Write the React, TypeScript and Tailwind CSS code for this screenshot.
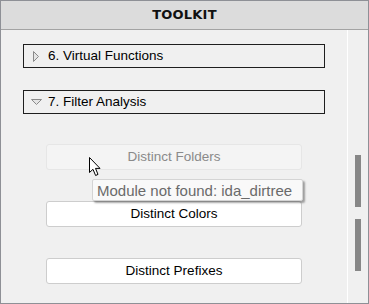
function RightTri() {
  return (
    <svg width="6" height="11" viewBox="0 0 6 11" className="shrink-0">
      <polygon points="0.5,0.5 5.5,5.5 0.5,10.5" fill="#e4e4e4" stroke="#8a8a8a" strokeWidth="1" />
    </svg>
  );
}

function DownTri() {
  return (
    <svg width="11" height="6" viewBox="0 0 11 6" className="shrink-0">
      <polygon points="0.5,0.5 10.5,0.5 5.5,5.5" fill="#e4e4e4" stroke="#8a8a8a" strokeWidth="1" />
    </svg>
  );
}

function Section({ label, open }: { label: string; open?: boolean }) {
  return (
    <div className="w-[302px] h-[24px] border border-[#1e1e1e] flex items-center">
      <div className="w-[24px] flex justify-center">{open ? <DownTri /> : <RightTri />}</div>
      <span className="text-[13.5px] text-black leading-none">{label}</span>
    </div>
  );
}

function Btn({ label, disabled }: { label: string; disabled?: boolean }) {
  return (
    <button
      className={
        disabled
          ? "w-[256px] h-[26px] rounded-[3px] border border-[#e6e6e6] bg-[#f4f4f4] text-[#8a8a8a] text-[13.5px]"
          : "w-[256px] h-[26px] rounded-[3px] border border-[#cdcdcd] bg-white text-black text-[13.5px]"
      }
    >
      {label}
    </button>
  );
}

export default function App() {
  return (
    <div
      className="relative w-[369px] h-[304px] border border-[#8e9096] bg-[#f0f0f0] flex flex-col overflow-hidden"
      style={{ fontFamily: '"Liberation Sans", Arial, sans-serif' }}
    >
      <div className="h-[29px] shrink-0 bg-[#dcdcdc] border-b border-[#a3a3a3] flex items-center justify-center">
        <span
          className="text-[13px] font-bold text-[#111] tracking-[0.2px]"
          style={{ fontFamily: '"DejaVu Sans", sans-serif' }}
        >
          TOOLKIT
        </span>
      </div>
      <div className="flex-1 flex">
        <div className="w-[347px] border-r border-white pt-[14px] pl-[22px]">
          <Section label="6. Virtual Functions" />
          <div className="mt-[22px]">
            <Section label="7. Filter Analysis" open />
          </div>
          <div className="mt-[30px] ml-[23px] flex flex-col gap-[31px]">
            <Btn label="Distinct Folders" disabled />
            <Btn label="Distinct Colors" />
            <Btn label="Distinct Prefixes" />
          </div>
        </div>
        <div className="flex-1 pt-[125px] pl-[7px] flex flex-col gap-[12px]">
          <div className="w-[6px] h-[52px] bg-[#878787]" />
          <div className="w-[6px] h-[52px] bg-[#878787]" />
        </div>
      </div>

      {/* tooltip */}
      <div className="absolute left-[91px] top-[178px] w-[211px] h-[22px] bg-[#f9f9f9] border border-[#d4d4d4] rounded-[2px] shadow-[2px_2px_2px_rgba(0,0,0,0.35)] flex items-center pl-[4px]">
        <span className="text-[15px] text-[#6a6a6a] leading-none whitespace-nowrap">Module not found: ida_dirtree</span>
      </div>

      {/* cursor */}
      <svg className="absolute left-[88px] top-[156px]" width="13" height="20" viewBox="0 0 13 20">
        <path
          d="M0.5 0.5 L0.5 15.5 L4 12.3 L6.6 18.5 L9 17.4 L6.5 11.4 L11 11.4 Z"
          fill="#fff"
          stroke="#000"
          strokeWidth="1"
          strokeLinejoin="miter"
        />
      </svg>
    </div>
  );
}
